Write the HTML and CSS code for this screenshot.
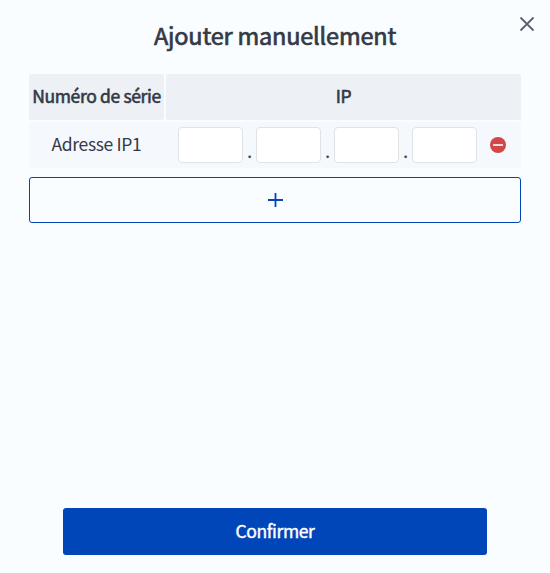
FILE: index.html
```html
<!DOCTYPE html>
<html lang="fr">
<head>
<meta charset="utf-8">
<title>Ajouter manuellement</title>
<link rel="stylesheet" href="styles.css">
</head>
<body>
<main class="dialog">
  <button class="close" aria-label="Fermer">
    <svg width="16" height="16" viewBox="0 0 16 16"><path d="M1.5 1.5L14.5 14.5M14.5 1.5L1.5 14.5"/></svg>
  </button>
  <h1 class="title">Ajouter manuellement</h1>
  <section class="grid">
    <div class="head">Numéro de série</div>
    <div class="head">IP</div>
    <div class="row">
      <div class="label">Adresse IP1</div>
      <div class="address">
        <input class="octet"><span class="dot">.</span>
        <input class="octet"><span class="dot">.</span>
        <input class="octet"><span class="dot">.</span>
        <input class="octet">
        <button class="remove" aria-label="Supprimer">
          <svg width="16" height="16" viewBox="0 0 16 16"><circle cx="8" cy="8" r="8"/><rect x="3" y="7" width="10" height="2"/></svg>
        </button>
      </div>
    </div>
  </section>
  <button class="add" aria-label="Ajouter">
    <svg width="16" height="16" viewBox="0 0 16 16"><path d="M8.5 1V15M1 8H16"/></svg>
  </button>
  <button class="confirm">Confirmer</button>
</main>
</body>
</html>
```

FILE: styles.css
```css
* {
  box-sizing: border-box;
}

body {
  margin: 0;
  background: #fafdff;
  color: #343946;
  font-family: "Noto Sans CJK SC", "Noto Sans", sans-serif;
}

button,
input {
  font: inherit;
  margin: 0;
  padding: 0;
}

svg {
  display: block;
}

.dialog {
  display: flex;
  flex-direction: column;
  height: 573px;
  padding: 0 29px 18px;
}

.close {
  position: absolute;
  top: 16px;
  right: 15px;
  border: 0;
  background: none;
}

.close path {
  stroke: #5d606d;
  stroke-width: 1.8;
  fill: none;
}

.title {
  margin: 0;
  height: 74px;
  line-height: 71px;
  font-size: 23.5px;
  font-weight: 400;
  letter-spacing: -0.2px;
  -webkit-text-stroke: 0.7px #343946;
  text-align: center;
  white-space: nowrap;
}

.grid {
  display: grid;
  grid-template-columns: 135px 1fr;
  grid-template-rows: 46px 46px;
  gap: 2px;
}

.head {
  background: #edf0f5;
  border-radius: 2px;
  font-size: 17.5px;
  font-weight: 400;
  letter-spacing: -0.35px;
  -webkit-text-stroke: 0.6px #343946;
  line-height: 44px;
  text-align: center;
  white-space: nowrap;
}

.row {
  grid-column: 1 / 3;
  display: grid;
  grid-template-columns: 135px 1fr;
  background: #f5f8fc;
  border-radius: 2px;
}

.label {
  font-size: 17.5px;
  letter-spacing: -0.35px;
  line-height: 44px;
  text-align: center;
}

.address {
  display: flex;
  padding: 5px 0 5px 14px;
}

.octet {
  width: 65px;
  height: 36px;
  border: 1px solid #dfe2e7;
  border-radius: 4px;
  background: #fff;
}

.dot {
  width: 13px;
  font-size: 17px;
  line-height: 47px;
  height: 36px;
  text-align: center;
  -webkit-text-stroke: 0.3px #343946;
}

.remove {
  margin: 10px 0 0 13px;
  width: 16px;
  height: 16px;
  border: 0;
  background: none;
}

.remove circle {
  fill: #d24747;
}

.remove rect {
  fill: #f6d7dc;
}

.add {
  display: flex;
  align-items: center;
  justify-content: center;
  height: 46px;
  margin-top: 9px;
  border: 1px solid #0046b8;
  border-radius: 3px;
  background: none;
}

.add path {
  stroke: #0046b8;
  stroke-width: 1.8;
  fill: none;
}

.confirm {
  height: 47px;
  margin: auto 34px 0;
  padding-bottom: 2px;
  border: 0;
  border-radius: 3px;
  background: #0046b8;
  color: #fff;
  font-size: 17.5px;
  font-weight: 400;
  letter-spacing: -0.4px;
  -webkit-text-stroke: 0.4px #fff;
}
```
